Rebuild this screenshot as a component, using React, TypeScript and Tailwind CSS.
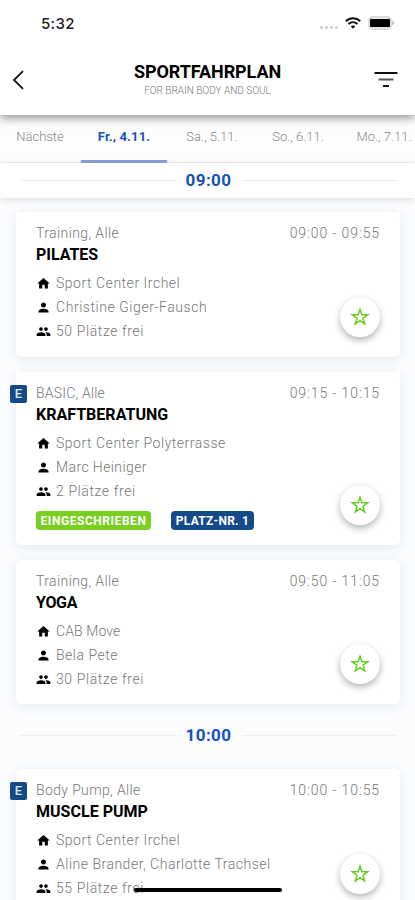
import { MdHome, MdPerson, MdPeople } from "react-icons/md";

type Course = {
  kind: string;
  kindTrack: string;
  title: string;
  titleTrack: string;
  time: string;
  place: string;
  placeTrack: string;
  coach: string;
  coachTrack: string;
  free: string;
  enrolled?: boolean;
  chips?: boolean;
  box: string;
};

const courses: Course[] = [
  { kind: "Training, Alle", kindTrack: "tracking-[0.4px]", title: "PILATES", titleTrack: "tracking-[-0.05px]", time: "09:00 - 09:55", place: "Sport Center Irchel", placeTrack: "tracking-[0.52px]", coach: "Christine Giger-Fausch", coachTrack: "tracking-[0.55px]", free: "50 Plätze frei", box: "mt-[14px] h-[145px]" },
  { kind: "BASIC, Alle", kindTrack: "tracking-[0.2px]", title: "KRAFTBERATUNG", titleTrack: "tracking-[0.02px]", time: "09:15 - 10:15", place: "Sport Center Polyterrasse", placeTrack: "tracking-[0.52px]", coach: "Marc Heiniger", coachTrack: "tracking-[0.4px]", free: "2 Plätze frei", enrolled: true, chips: true, box: "mt-[15px] h-[173px]" },
  { kind: "Training, Alle", kindTrack: "tracking-[0.4px]", title: "YOGA", titleTrack: "tracking-[-0.3px]", time: "09:50 - 11:05", place: "CAB Move", placeTrack: "tracking-[0.1px]", coach: "Bela Pete", coachTrack: "tracking-[0.5px]", free: "30 Plätze frei", box: "mt-[15px] h-[144px]" },
];

const late: Course = { kind: "Body Pump, Alle", kindTrack: "tracking-[0.37px]", title: "MUSCLE PUMP", titleTrack: "tracking-[0.02px]", time: "10:00 - 10:55", place: "Sport Center Irchel", placeTrack: "tracking-[0.52px]", coach: "Aline Brander, Charlotte Trachsel", coachTrack: "tracking-[0.5px]", free: "55 Plätze frei", enrolled: true, box: "mt-[16px] h-[145px]" };

function Star() {
  return (
    <svg className="size-5" viewBox="0 0 20 20" fill="none" stroke="currentColor" strokeWidth="1.5" strokeLinejoin="miter">
      <path d="M10 2.3 11.9 7.8H17.6L13 11.3 14.7 16.9 10 13.6 5.3 16.9 7 11.3 2.4 7.8H8.1Z" />
    </svg>
  );
}

function CourseCard({ c }: { c: Course }) {
  return (
    <article className={`relative mr-[15px] ml-4 shrink-0 rounded-[5px] bg-white pr-[20px] pl-5 pt-[11px] shadow-[0_2px_12px_rgba(60,70,80,0.11)] ${c.box}`}>
      {c.enrolled && (
        <span className="absolute -left-[6px] top-[13px] flex h-[18px] w-[17px] items-center justify-center rounded-[2px] bg-[#154a88] text-[13px] font-medium text-[#dce8f4]">E</span>
      )}
      <div className="flex h-[21px] items-center justify-between text-[14px] font-light text-[#777]">
        <span className={c.kindTrack}>{c.kind}</span>
        <span className="tracking-[0.88px]">{c.time}</span>
      </div>
      <h2 className={`h-[21px] text-[16px] leading-[21px] font-bold text-black ${c.titleTrack}`}>{c.title}</h2>
      <ul className="mt-[6px] text-[14px] font-light text-[#777]">
        <li className="flex h-6 items-center">
          <MdHome className="mr-[5px] size-[15px] text-black" />
          <span className={c.placeTrack}>{c.place}</span>
        </li>
        <li className="flex h-6 items-center">
          <MdPerson className="mr-[5px] size-[15px] text-black" />
          <span className={c.coachTrack}>{c.coach}</span>
        </li>
        <li className="flex h-6 items-center">
          <MdPeople className="mr-[5px] size-[15px] text-black" />
          <span className="tracking-[0.6px]">{c.free}</span>
        </li>
      </ul>
      {c.chips && (
        <div className="mt-2 flex gap-5 text-[12px] font-bold text-white">
          <span className="flex h-[19px] w-[115px] items-center justify-center rounded-[4px] bg-[#77cf20] tracking-[0.55px]">EINGESCHRIEBEN</span>
          <span className="flex h-[19px] w-[83px] items-center justify-center rounded-[4px] bg-[#154a88] tracking-[0.25px]">PLATZ-NR. 1</span>
        </div>
      )}
      <button className="absolute bottom-5 right-5 flex size-10 items-center justify-center rounded-full bg-white text-[#68cc20] shadow-[0_3px_7px_rgba(0,0,0,0.3)]">
        <Star />
      </button>
    </article>
  );
}

function Hour({ children }: { children: string }) {
  return (
    <div className="flex h-[35px] items-center pr-[18px] pl-5">
      <i className="h-px flex-1 bg-[#eceef0]" />
      <b className="w-[66px] text-center text-[17px] tracking-[0.4px] text-[#1751bd]">{children}</b>
      <i className="h-px flex-1 bg-[#eceef0]" />
    </div>
  );
}

const tabs = [
  { label: "Nächste", active: false },
  { label: "Fr., 4.11.", active: true },
  { label: "Sa., 5.11.", active: false },
  { label: "So., 6.11.", active: false },
  { label: "Mo., 7.11.", active: false },
];

export default function App() {
  return (
    <div className="relative flex h-[900px] w-[415px] flex-col overflow-hidden bg-[#fafcfe] font-['Roboto','Liberation_Sans',sans-serif]">
      <header className="relative z-10 h-[115px] shrink-0 bg-white shadow-[0_3px_9px_rgba(0,0,0,0.42)]">
        <div className="flex h-[46px] items-center justify-between pl-[41px] pr-[20px]">
          <span className="mt-[2px] font-['Inter',sans-serif] text-[15px] font-medium tracking-[0.3px] text-[#222]">5:32</span>
          <div className="flex items-center">
            <div className="mr-[7px] mt-[8px] flex gap-[2px]">
              <i className="size-[3px] rounded-full bg-[#ccc]" />
              <i className="size-[3px] rounded-full bg-[#ccc]" />
              <i className="size-[3px] rounded-full bg-[#ccc]" />
              <i className="size-[3px] rounded-full bg-[#ccc]" />
            </div>
            <svg className="mr-[7px] h-[12px] w-[16px]" viewBox="0 0 16 12" fill="none" stroke="#111" strokeWidth="1.9">
              <path d="M.8 4.2C4.9.3 11.1.3 15.2 4.2M3.5 7C6.1 4.6 9.9 4.6 12.5 7" />
              <path d="M5.8 9.3Q8 7.5 10.2 9.3L8 11.8Z" fill="#111" stroke="none" />
            </svg>
            <svg className="h-[14px] w-[27px]" viewBox="0 0 27 14">
              <rect x=".8" y=".8" width="22.4" height="12.4" rx="3" fill="#e4e4e4" stroke="#cfcfcf" />
              <rect x="2" y="3" width="20" height="8" rx="1" fill="#000" />
              <path d="M24 4.5Q28 7 24 9.5Z" fill="#bbb" />
            </svg>
          </div>
        </div>
        <div className="flex h-[68px] items-center justify-between pl-3 pr-[17px]">
          <svg className="h-5 w-3" viewBox="0 0 12 20" fill="none" stroke="#111" strokeWidth="1.8"><path d="M11 1.2 2 10l9 8.8" /></svg>
          <div className="mt-[1px] flex flex-col items-center pl-[17px]">
            <h1 className="h-[20px] whitespace-nowrap text-[18px] leading-[20px] font-bold tracking-[-0.07px] text-black">SPORTFAHRPLAN</h1>
            <p className="h-[17px] whitespace-nowrap text-[10px] leading-[17px] font-light text-[#777]">FOR BRAIN BODY AND SOUL</p>
          </div>
          <svg className="h-4 w-6" viewBox="0 0 24 16"><path d="M.5 0h23v2H.5Z" fill="#111" /><path d="M4.5 6.5h15v2h-15Z" fill="#555" /><path d="M9 13h6v2H9Z" fill="#111" /></svg>
        </div>
      </header>
      <nav className="-ml-[5px] flex h-12 w-[430px] shrink-0 border-b border-[#eceef0] bg-[#fdfdfe]">
        {tabs.map((t) => (
          <span key={t.label} className={`flex w-[86px] items-center justify-center whitespace-nowrap text-[13px] ${t.active ? "-mb-px border-b-[3px] border-[#8b9fd8] font-bold text-[#1751bd]" : "font-light text-[#888]"}`}>
            <span className={t.active ? "-mt-px tracking-[0.15px]" : "-mt-1 pl-1 first:pl-1"}>{t.label}</span>
          </span>
        ))}
      </nav>
      <div className="shrink-0 bg-white shadow-[0_2px_8px_rgba(0,0,0,0.12)]"><Hour>09:00</Hour></div>
      {courses.map((c) => <CourseCard key={c.title} c={c} />)}
      <div className="mt-[14px] shrink-0"><Hour>10:00</Hour></div>
      <CourseCard c={late} />
      <div className="absolute bottom-[8px] left-[134px] h-[4px] w-[148px] rounded-full bg-black" />
    </div>
  );
}
